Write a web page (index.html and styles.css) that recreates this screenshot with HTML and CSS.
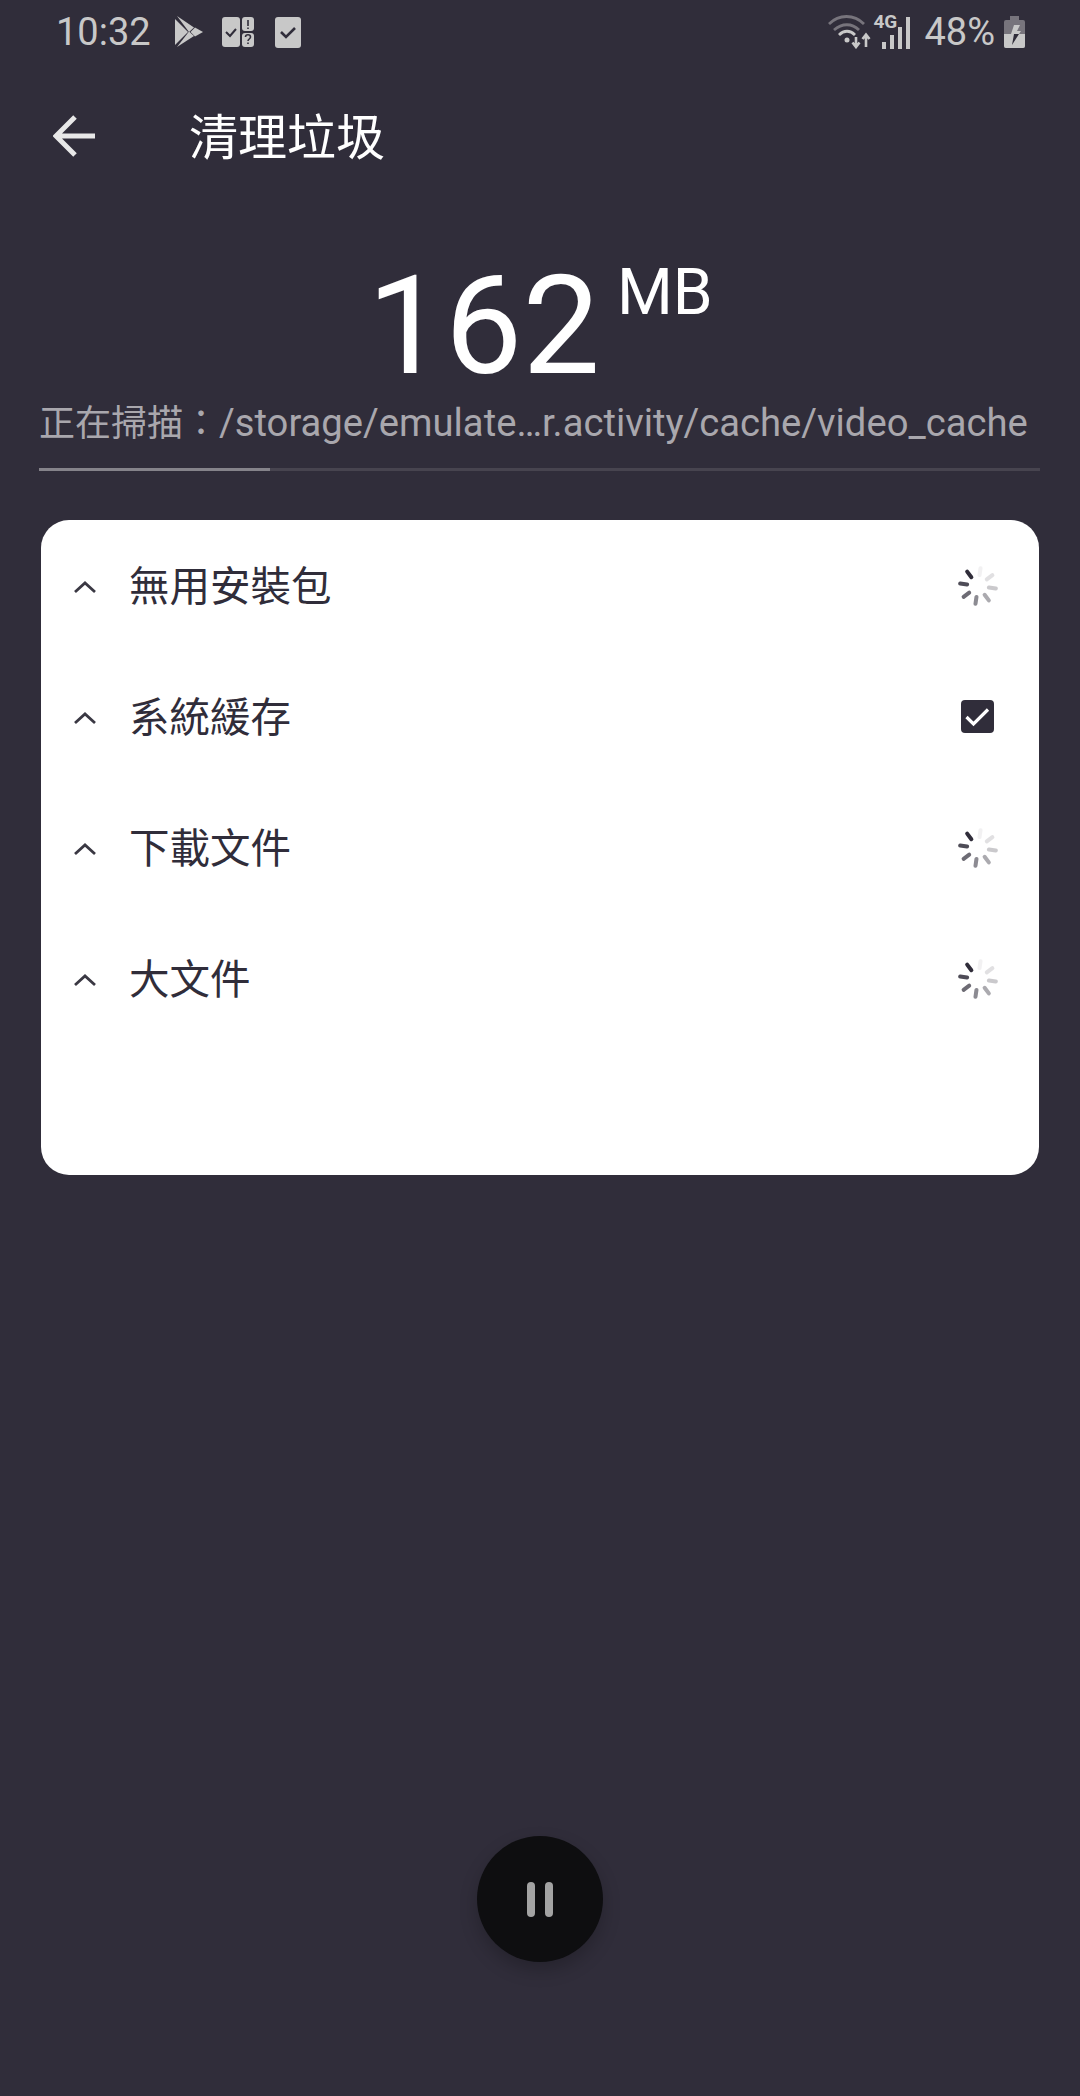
FILE: index.html
```html
<!DOCTYPE html>
<html lang="zh-Hant">
<head>
<meta charset="utf-8">
<title>清理垃圾</title>
<link rel="stylesheet" href="styles.css">
</head>
<body>
<div class="screen">
  <div class="status">
    <span class="time">10:32</span>
    <svg class="ic-play" viewBox="0 0 28 32"><path d="M0 3V29L13 16Z" fill="#c8c8c8"/><path d="M2 0L19 11.500L14 16Z" fill="#c8c8c8"/><path d="M2 31L19 20L14 15.500Z" fill="#c8c8c8"/><path d="M20 11.500L28 16L20 20.500L15.500 16Z" fill="#c8c8c8"/></svg>
    <svg class="ic-tasks" viewBox="0 0 32 30"><rect x="0" y="0" width="18" height="30" rx="3" fill="#c8c8c8"/><rect x="20" y="0" width="12" height="14" rx="3" fill="#c8c8c8"/><rect x="20" y="16" width="12" height="14" rx="3" fill="#c8c8c8"/><path d="M4 15l4 4 6-7" fill="none" stroke="#302d3a" stroke-width="2"/><path d="M26 3v6M26 10.500v1.500M23.500 20c0-3 5-3 5 0 0 2-2.500 2-2.500 4M26 25.500v1.500" fill="none" stroke="#302d3a" stroke-width="1.600"/></svg>
    <svg class="ic-check" viewBox="0 0 26 31"><rect width="26" height="31" rx="3" fill="#c8c8c8"/><path d="M6 15l5 5 9-9" fill="none" stroke="#302d3a" stroke-width="2.600"/></svg>
    <span class="status-gap"></span>
    <svg class="ic-wifi" viewBox="0 0 44 34"><path d="M1 9C11 -1 26 -1 36 9" fill="none" stroke="#77747c" stroke-width="2.800"/><path d="M6 15C14 8 24 8 31 15" fill="none" stroke="#77747c" stroke-width="2.800"/><path d="M11 20C16 15 22 15 27 20" fill="none" stroke="#c8c8c8" stroke-width="2.800"/><circle cx="19" cy="25" r="2.500" fill="#c8c8c8"/><path d="M28 22v9M24.500 27.500L28 32l3.500-4.500" fill="none" stroke="#c8c8c8" stroke-width="2.600"/><path d="M38 32V20M34.500 24L38 19.500L41.500 24" fill="none" stroke="#c8c8c8" stroke-width="2.600"/></svg>
    <span class="signal">
      <span class="net">4G</span>
      <svg class="ic-bars" viewBox="0 0 29 32"><rect x="0" y="25" width="4" height="7" fill="#c8c8c8"/><rect x="8" y="18" width="4" height="14" fill="#c8c8c8"/><rect x="16" y="10" width="4" height="22" fill="#c8c8c8"/><rect x="24" y="0" width="4" height="32" fill="#c8c8c8"/></svg>
    </span>
    <span class="pct">48%</span>
    <svg class="ic-batt" viewBox="0 0 21 32"><path d="M6 0h9v4h4a2 2 0 0 1 2 2v24a2 2 0 0 1-2 2H2a2 2 0 0 1-2-2V6a2 2 0 0 1 2-2h4z" fill="#77747c"/><path d="M0 18h21v12a2 2 0 0 1-2 2H2a2 2 0 0 1-2-2z" fill="#c8c8c8"/><path d="M10 9h6l-3 6h4l-2 3H7z" fill="#c8c8c8"/><path d="M7 18h8L8 29l2-11z" fill="#302d3a"/></svg>
  </div>

  <div class="toolbar">
    <svg class="ic-back" viewBox="0 0 42 42"><path d="M42 21H3M22 2L3 21l19 19" fill="none" stroke="#e8e8e8" stroke-width="5"/></svg>
    <span class="title">清理垃圾</span>
  </div>

  <div class="size">
    <span class="num">162</span><span class="unit">MB</span>
  </div>
  <div class="path"><span class="path-cjk">正在掃描：</span><span class="path-latin">/storage/emulate…r.activity/cache/video_cache</span></div>
  <div class="progress"><div class="progress-fill"></div></div>

  <div class="card">
    <div class="row">
      <svg class="chev" viewBox="0 0 24 14"><path d="M2 12L12 3l10 9" fill="none" stroke="#3a3843" stroke-width="2.800"/></svg>
      <span class="label">無用安裝包</span>
      <svg class="spin" viewBox="-20 -20 40 40"><use href="#spokes"/></svg>
    </div>
    <div class="row">
      <svg class="chev" viewBox="0 0 24 14"><path d="M2 12L12 3l10 9" fill="none" stroke="#3a3843" stroke-width="2.800"/></svg>
      <span class="label">系統緩存</span>
      <svg class="box" viewBox="0 0 33 33"><rect width="33" height="33" rx="4" fill="#302d3a"/><path d="M5.500 17l7 7L27 9.500" fill="none" stroke="#fff" stroke-width="3.200"/></svg>
    </div>
    <div class="row">
      <svg class="chev" viewBox="0 0 24 14"><path d="M2 12L12 3l10 9" fill="none" stroke="#3a3843" stroke-width="2.800"/></svg>
      <span class="label">下載文件</span>
      <svg class="spin" viewBox="-20 -20 40 40"><use href="#spokes"/></svg>
    </div>
    <div class="row">
      <svg class="chev" viewBox="0 0 24 14"><path d="M2 12L12 3l10 9" fill="none" stroke="#3a3843" stroke-width="2.800"/></svg>
      <span class="label">大文件</span>
      <svg class="spin" viewBox="-20 -20 40 40"><use href="#spokes"/></svg>
    </div>
  </div>

  <div class="fab">
    <span class="bar"></span><span class="bar"></span>
  </div>
</div>

<svg class="defs" width="0" height="0">
  <defs>
    <g id="spokes" stroke="#302d3a" stroke-width="4" stroke-linecap="round">
      <path d="M0-11V-18" transform="rotate(8)" opacity=".06"/>
      <path d="M0-11V-18" transform="rotate(53)" opacity=".14"/>
      <path d="M0-11V-18" transform="rotate(98)" opacity=".25"/>
      <path d="M0-11V-18" transform="rotate(143)" opacity=".4"/>
      <path d="M0-11V-18" transform="rotate(188)" opacity=".55"/>
      <path d="M0-11V-18" transform="rotate(233)" opacity=".7"/>
      <path d="M0-11V-18" transform="rotate(278)" opacity=".85"/>
      <path d="M0-11V-18" transform="rotate(323)" opacity="1"/>
    </g>
  </defs>
</svg>
</body>
</html>
```

FILE: styles.css
```css
* { box-sizing: border-box; }
html, body { margin: 0; padding: 0; }
body {
  width: 1080px;
  height: 2096px;
  overflow: hidden;
  background: #302d3a;
  font-family: Roboto, "Noto Sans CJK TC", sans-serif;
}
.screen {
  height: 2096px;
  display: flex;
  flex-direction: column;
}
.defs { position: absolute; }

.status {
  height: 64px;
  display: flex;
  align-items: center;
  padding: 0 55px 0 56px;
  color: #c8c8c8;
}
.time { font-size: 38px; line-height: 64px; width: 119px; }
.ic-play { width: 28px; height: 32px; margin-right: 19px; }
.ic-tasks { width: 32px; height: 30px; margin-right: 21px; }
.ic-check { width: 26px; height: 31px; }
.status-gap { flex: 1; }
.ic-wifi { width: 44px; height: 34px; margin-right: 2px; }
.signal { position: relative; width: 36px; height: 34px; margin-right: 14px; }
.net {
  position: absolute;
  left: -1px;
  top: -3px;
  font-size: 19px;
  font-weight: 700;
  line-height: 20px;
}
.ic-bars { position: absolute; left: 8px; top: 2px; width: 29px; height: 32px; }
.pct { font-size: 38px; line-height: 64px; margin-right: 9px; }
.ic-batt { width: 21px; height: 32px; }

.toolbar {
  height: 144px;
  display: flex;
  align-items: center;
  padding-left: 53px;
}
.ic-back { width: 42px; height: 42px; margin-right: 94px; }
.title { font-size: 49px; line-height: 64px; margin-top: 6px; color: #fff; }

.size {
  height: 168px;
  display: flex;
  justify-content: center;
  color: #fff;
}
.num { font-size: 138px; line-height: 168px; margin-top: 34px; }
.unit { font-size: 64px; line-height: 72px; margin-top: 49px; margin-left: 17px; }

.path {
  margin: 23px 0 0 39px;
  height: 48px;
  line-height: 48px;
  color: #a9a7ad;
  white-space: nowrap;
}
.path-cjk { font-size: 36px; }
.path-latin { font-size: 38.200px; }
.progress {
  margin: 21px 40px 0 39px;
  height: 3px;
  background: #47444f;
}
.progress-fill { width: 231px; height: 3px; background: #85838a; }

.card {
  margin: 49px 41px 0;
  height: 655px;
  background: #fff;
  border-radius: 28px;
  padding-top: 1px;
}
.row {
  height: 131px;
  display: flex;
  align-items: center;
  padding: 0 45px 0 32px;
}
.chev { width: 24px; height: 14px; margin-right: 32px; }
.label { flex: 1; font-size: 40.500px; line-height: 56px; color: #302d3a; }
.spin { width: 40px; height: 40px; margin: -2px -4px 0 0; }
.box { width: 33px; height: 33px; margin: -2px 0 0; }

.fab {
  width: 126px;
  height: 126px;
  margin: auto auto 134px;
  border-radius: 50%;
  background: #0e0e10;
  box-shadow: 0 8px 18px rgba(0, 0, 0, .22);
  display: flex;
  align-items: center;
  justify-content: center;
  gap: 10px;
}
.bar { width: 8px; height: 35px; border-radius: 4px; background: #a3a3a3; }
```
